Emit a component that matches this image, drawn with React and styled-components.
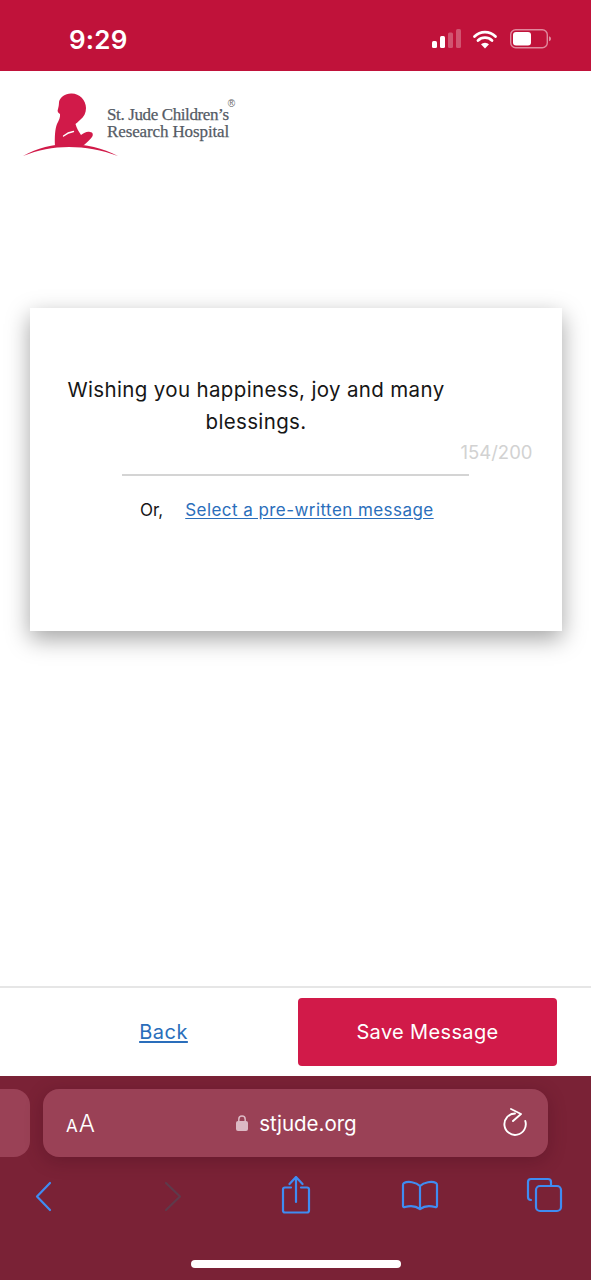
import React from "react";
import styled, { createGlobalStyle } from "styled-components";

const crimson = "#c0123a";
const brand = "#d11a49";
const linkBlue = "#2a6ebb";
const safari = "#7a2236";
const pill = "#9a4156";
const iconBlue = "#3f8cf2";
const sans = `Inter, "Noto Sans", "Liberation Sans", sans-serif`;

const Global = createGlobalStyle`
  html, body { margin: 0; padding: 0; background: #fff; }
  * { box-sizing: border-box; }
  body { font-family: ${sans}; }
`;

const Page = styled.div`
  width: 591px; height: 1280px;
  display: flex; flex-direction: column;
  overflow: hidden;
`;

const StatusBar = styled.header`
  height: 71px; flex: none;
  background: ${crimson};
  display: flex; align-items: center; justify-content: space-between;
  padding: 7px 38px 0 69px;
  color: #fff;
`;
const Clock = styled.span`
  font-size: 26px; font-weight: 600; letter-spacing: 0.2px;
`;
const StatusIcons = styled.svg`
  width: 122px; height: 20px; display: block;
`;

const Main = styled.main`
  flex: 1; min-height: 0;
  display: flex; flex-direction: column;
`;

const LogoRow = styled.div`
  height: 237px; flex: none;
  display: flex; align-items: flex-start;
  padding: 21px 0 0 22px;
`;
const LogoMark = styled.svg`
  width: 98px; height: 66px; display: block; flex: none;
`;
const LogoText = styled.div`
  position: relative;
  margin: 14px 0 0 -13px;
  font-family: "Liberation Serif", serif;
  font-size: 17px; line-height: 17px;
  color: #555b65;
  white-space: nowrap;
  -webkit-text-stroke: 0.25px #555b65;
`;
const LogoLine = styled.div`
  letter-spacing: ${({ $track }) => $track}px;
`;
const Registered = styled.span`
  position: absolute; top: -7px; right: -6px;
  font-family: "Liberation Sans", sans-serif;
  font-size: 10px; line-height: 10px;
  -webkit-text-stroke: 0;
  color: #666;
`;

const Card = styled.section`
  width: 532px; height: 323px; flex: none;
  margin-left: 30px;
  background: #fff;
  box-shadow: 0 8px 22px rgba(0, 0, 0, 0.36);
  padding-top: 66px;
  display: flex; flex-direction: column;
`;
const Message = styled.p`
  margin: 0 0 0 16px;
  width: 420px;
  text-align: center;
  color: #161616;
  font-size: 20.5px; line-height: 32px;
  letter-spacing: 0.35px;
`;
const Counter = styled.div`
  align-self: flex-end;
  margin: 2px 29.5px 0 0;
  font-size: 18.5px; line-height: 24px;
  color: #d2d2d2;
`;
const Rule = styled.hr`
  width: 347px; height: 2px;
  margin: 10px 0 0 92px;
  border: 0; background: #d4d4d4;
`;
const OrRow = styled.div`
  margin: 22px 0 0 110px;
  display: flex; align-items: baseline; gap: 22px;
  font-size: 17px; line-height: 24px;
  color: #161616;
`;
const TextLink = styled.a`
  color: ${linkBlue};
  text-decoration: underline;
  text-underline-offset: 2px;
  font-size: ${({ $size }) => $size || 17}px;
  letter-spacing: ${({ $track }) => $track || 0.44}px;
`;

const Footer = styled.footer`
  height: 90px; flex: none;
  border-top: 2px solid #e6e6e6;
  display: flex; align-items: center;
  padding: 0 34px 0 0;
  background: #fff;
`;
const BackCell = styled.div`
  flex: 1; text-align: center;
  padding-left: 29px;
`;
const SaveButton = styled.button`
  width: 259px; height: 68px;
  margin-top: -1px;
  border: 0; border-radius: 4px;
  background: ${brand}; color: #fff;
  font-family: ${sans}; font-size: 20px;
  letter-spacing: 0.35px;
`;

const Browser = styled.div`
  height: 204px; flex: none;
  background: ${safari};
  display: flex; flex-direction: column;
`;
const TabRow = styled.div`
  height: 68px; margin-top: 13px; flex: none;
  display: flex; gap: 13px;
`;
const PrevTab = styled.div`
  width: 30px;
  background: ${pill};
  border-radius: 0 16px 16px 0;
`;
const AddressBar = styled.div`
  width: 505px;
  background: ${pill};
  border-radius: 16px;
  box-shadow: 0 4px 18px rgba(60, 10, 25, 0.3);
  display: flex; align-items: center; justify-content: space-between;
  padding: 0 20px 0 23px;
  color: #fff;
`;
const AaLabel = styled.span`
  display: flex; align-items: baseline;
  font-size: 24px; font-weight: 300;
  > small { font-size: 17px; margin-right: 1px; font-weight: 400; }
`;
const Domain = styled.span`
  display: flex; align-items: center; gap: 11px;
  font-size: 20.5px;
  margin-left: -4px;
`;
const Toolbar = styled.nav`
  display: flex; justify-content: space-between;
  padding: 19px 26px 0 24px;
`;
const ToolIcon = styled.svg`
  width: 40px; height: 40px; display: block;
  fill: none; stroke: ${({ $dim }) => ($dim ? "#5f3a4b" : iconBlue)};
  stroke-width: 2.2; stroke-linecap: round; stroke-linejoin: round;
`;
const HomeBar = styled.div`
  width: 210px; height: 8px;
  margin: 44px 0 0 191px;
  border-radius: 4px;
  background: #fff;
`;

export default function App() {
  return (
    <Page>
      <Global />
      <StatusBar>
        <Clock>9:29</Clock>
        <StatusIcons viewBox="0 0 122 20">
          <g fill="#fff">
            <rect x="1" y="12" width="5" height="7" rx="1.5" />
            <rect x="9" y="7" width="5" height="12" rx="1.5" />
            <rect x="17" y="3.500" width="5" height="15.500" rx="1.5" opacity="0.28" />
            <rect x="25" y="0" width="5" height="19" rx="1.5" opacity="0.28" />
            <path d="M54 19.500l-4-4.200a5.800 5.800 0 0 1 8 0z" />
          </g>
          <path d="M43.500 7.500a15 15 0 0 1 21 0M47 11.500a10 10 0 0 1 14 0" fill="none" stroke="#fff" strokeWidth="2.800" strokeLinecap="round" />
          <rect x="79.700" y="0.700" width="36.600" height="18" rx="5" fill="none" stroke="#fff" strokeOpacity="0.5" strokeWidth="1.400" />
          <rect x="82" y="3" width="18" height="13.500" rx="3" fill="#fff" />
          <path d="M118 7.200v5c1.500-.5 2-1.500 2-2.500s-.5-2-2-2.500z" fill="#fff" fillOpacity="0.5" />
        </StatusIcons>
      </StatusBar>

      <Main>
        <LogoRow>
          <LogoMark viewBox="22 92 98 66">
            <path
              fill={brand}
              d="M71 93.500C79 93 86 100 86 108C86 113 84 117 80 120C78 122 76.500 123 75.500 124C76.500 128 79 132 81 135C84 133 87 131 90 132C93 132 93.500 135 92 137C90 140 87 142 84 145L55 146C54.500 137 55 129 57 124C59 120 60.500 117 60 114C58 113 57 111 58 109C58.500 107 59 105 59 102C60 97 65 94 71 93.500Z"
            />
            <path d="M63.500 136c3-2.500 6.500-4 10-4.500" fill="none" stroke="#fff" strokeWidth="1.300" strokeLinecap="round" />
            <path fill={brand} d="M23 156c14-8 30-12 46-12s34 4 49 12c-16-6-33-9-49-9s-31 3-46 9z" />
          </LogoMark>
          <LogoText>
            <LogoLine $track={-0.38}>St. Jude Children’s</LogoLine>
            <LogoLine $track={-0.12}>Research Hospital</LogoLine>
            <Registered>®</Registered>
          </LogoText>
        </LogoRow>

        <Card>
          <Message>
            Wishing you happiness, joy and many
            <br />
            blessings.
          </Message>
          <Counter>154/200</Counter>
          <Rule />
          <OrRow>
            <span>Or,</span>
            <TextLink href="#">Select a pre-written message</TextLink>
          </OrRow>
        </Card>
      </Main>

      <Footer>
        <BackCell>
          <TextLink href="#" $size={20} $track={0.5}>Back</TextLink>
        </BackCell>
        <SaveButton type="button">Save Message</SaveButton>
      </Footer>

      <Browser>
        <TabRow>
          <PrevTab />
          <AddressBar>
            <AaLabel><small>A</small>A</AaLabel>
            <Domain>
              <svg width="12" height="16" viewBox="0 0 12 16" aria-hidden="true">
                <rect x="0" y="6" width="12" height="10" rx="2" fill="#dcb9c4" />
                <path d="M2.800 6.500V4.200a3.200 3.200 0 0 1 6.400 0v2.300" fill="none" stroke="#dcb9c4" strokeWidth="1.500" />
              </svg>
              stjude.org
            </Domain>
            <svg width="26" height="30" viewBox="0 0 26 30" fill="none" stroke="#fff" strokeWidth="1.900" strokeLinecap="round" strokeLinejoin="round" aria-hidden="true">
              <path d="M13 5.500A10.700 10.700 0 1 0 23.300 13" />
              <path d="M9 1l10 5-8 7" />
            </svg>
          </AddressBar>
        </TabRow>
        <Toolbar>
          <ToolIcon viewBox="0 0 40 40"><path d="M26 7L13 20.500 26 34" /></ToolIcon>
          <ToolIcon viewBox="0 0 40 40" $dim><path d="M17 7l14 13.500L17 34" /></ToolIcon>
          <ToolIcon viewBox="0 0 40 40">
            <path d="M15 13h-6a2 2 0 0 0-2 2v21a2 2 0 0 0 2 2h22a2 2 0 0 0 2-2V15a2 2 0 0 0-2-2h-6" transform="translate(1 -1.500)" />
            <path d="M21 26V2M14.500 8L21 1l6.500 7" />
          </ToolIcon>
          <ToolIcon viewBox="0 0 40 40">
            <path d="M20 10c-4-4-12-5-16-3-1 .5-1 1-1 2v21c0 1 1 1.500 2 1 5-1.500 11-1 15 2 4-3 10-3.500 15-2 1 .5 2 0 2-1V9c0-1 0-1.500-1-2-4-2-12-1-16 3zM20 10v22" />
          </ToolIcon>
          <ToolIcon viewBox="0 0 40 40">
            <path d="M6 24a3 3 0 0 1-3-3V6a3 3 0 0 1 3-3h17a3 3 0 0 1 3 3v3" />
            <rect x="11" y="10" width="25" height="25" rx="4" />
          </ToolIcon>
        </Toolbar>
        <HomeBar />
      </Browser>
    </Page>
  );
}
